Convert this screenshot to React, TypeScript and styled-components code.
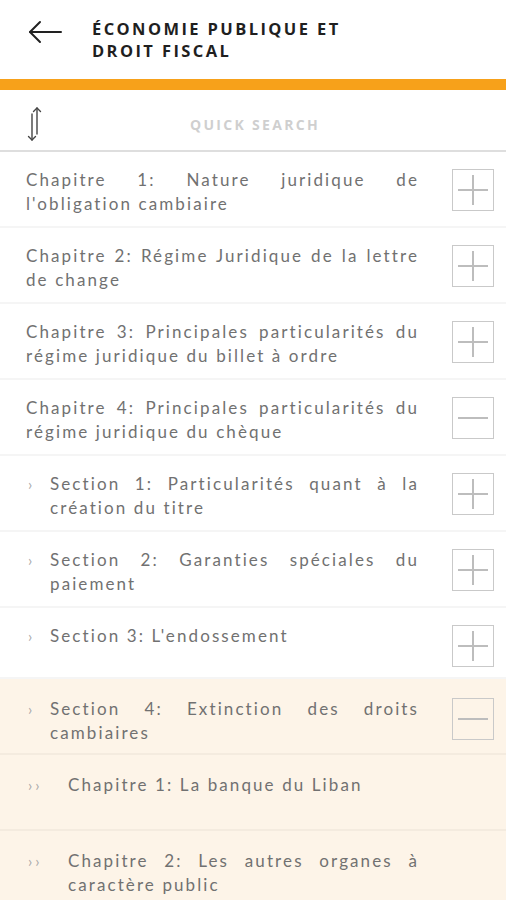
import React from 'react'
import styled, { createGlobalStyle } from 'styled-components'

const GlobalStyle = createGlobalStyle`
  html, body {
    margin: 0;
    padding: 0;
    background: #ffffff;
  }
  body {
    font-family: Lato, "Open Sans", "Liberation Sans", sans-serif;
  }
`

type Kind = 'chapter' | 'section' | 'sub'

type Item = {
  kind: Kind
  label: string
  toggle?: 'plus' | 'minus'
  open?: boolean
}

const items: Item[] = [
  { kind: 'chapter', label: "Chapitre 1: Nature juridique de l'obligation cambiaire", toggle: 'plus' },
  { kind: 'chapter', label: 'Chapitre 2: Régime Juridique de la lettre de change', toggle: 'plus' },
  { kind: 'chapter', label: 'Chapitre 3: Principales particularités du régime juridique du billet à ordre', toggle: 'plus' },
  { kind: 'chapter', label: 'Chapitre 4: Principales particularités du régime juridique du chèque', toggle: 'minus' },
  { kind: 'section', label: 'Section 1: Particularités quant à la création du titre', toggle: 'plus' },
  { kind: 'section', label: 'Section 2: Garanties spéciales du paiement', toggle: 'plus' },
  { kind: 'section', label: "Section 3: L'endossement", toggle: 'plus' },
  { kind: 'section', label: 'Section 4: Extinction des droits cambiaires', toggle: 'minus', open: true },
  { kind: 'sub', label: 'Chapitre 1: La banque du Liban', open: true },
  { kind: 'sub', label: 'Chapitre 2: Les autres organes à caractère public', open: true },
]

const Page = styled.div`
  width: 506px;
  height: 900px;
  overflow: hidden;
  background: #ffffff;
`

const Header = styled.header`
  height: 79px;
  display: flex;
  align-items: flex-start;
  padding: 12px 0 0 28px;
  box-sizing: border-box;
`

const BackButton = styled.button`
  width: 38px;
  height: 40px;
  padding: 0;
  border: 0;
  background: none;
  display: flex;
  align-items: center;
  justify-content: flex-start;
  margin-right: 26px;
`

const Title = styled.h1`
  margin: 6px 0 0;
  font-family: "Open Sans", Lato, sans-serif;
  font-weight: 700;
  font-size: 16.5px;
  line-height: 22px;
  letter-spacing: 2.4px;
  color: #1f1f1f;
  text-transform: uppercase;
`

const AccentBar = styled.div`
  height: 11px;
  background: #f7a11a;
`

const SearchBar = styled.div`
  height: 60px;
  display: flex;
  align-items: center;
  padding: 8px 0 0 24px;
  box-sizing: border-box;
  border-bottom: 2px solid #dedede;
  height: 62px;
`

const SortButton = styled.div`
  width: 24px;
  height: 36px;
  display: flex;
  align-items: center;
`

const SearchLabel = styled.div`
  flex: 1;
  text-align: center;
  margin-right: 44px;
  font-family: "Open Sans", Lato, sans-serif;
  font-weight: 700;
  font-size: 14px;
  letter-spacing: 2.3px;
  color: #cfcfcf;
`

const List = styled.ul`
  list-style: none;
  margin: 0;
  padding: 0;
`

const Row = styled.li<{ $open?: boolean; $kind: Kind }>`
  display: flex;
  align-items: flex-start;
  min-height: ${p => (p.$kind === 'sub' ? '76px' : '0')};
  padding: ${p => (p.$open ? '18px' : '16px')} 12px ${p => (p.$open ? '8px' : '10px')} 26px;
  box-sizing: border-box;
  background: ${p => (p.$open ? '#fdf4e8' : '#ffffff')};
  border-bottom: 2px solid ${p => (p.$open ? '#f4ebdf' : '#f5f5f5')};
`

const Marker = styled.span<{ $kind: Kind }>`
  flex: none;
  box-sizing: border-box;
  width: ${p => (p.$kind === 'sub' ? '42px' : '24px')};
  padding-left: 2px;
  font-size: 15px;
  line-height: 24px;
  letter-spacing: 3px;
  color: #a8a8a8;
`

const Label = styled.span`
  flex: 1;
  font-size: 17px;
  line-height: 24px;
  letter-spacing: 2.1px;
  color: #717171;
  text-align: justify;
  margin-right: 33px;
`

const ToggleBox = styled.div`
  flex: none;
  width: 40px;
  height: 40px;
  margin-top: 1px;
  border: 1px solid #c9c9c9;
  display: flex;
  align-items: center;
  justify-content: center;
`

const Spacer = styled.div`
  flex: none;
  width: 42px;
`

const BackArrow = () => (
  <svg width="34" height="24" viewBox="0 0 34 24" fill="none" stroke="#222" strokeWidth="2" strokeLinecap="round" strokeLinejoin="round">
    <path d="M2 12h31" />
    <path d="M12 2L2 12l10 10" />
  </svg>
)

const SortIcon = () => (
  <svg width="22" height="36" viewBox="0 0 22 36" fill="none" stroke="#444" strokeWidth="1.4" strokeLinecap="round" strokeLinejoin="round">
    <path d="M13 2v26" />
    <path d="M9.5 5.5L13 2l3.5 3.5" />
    <path d="M8 8v26" />
    <path d="M4.5 30.5L8 34l3.5-3.5" />
  </svg>
)

const ToggleIcon = ({ type }: { type: 'plus' | 'minus' }) => (
  <svg width="32" height="32" viewBox="0 0 32 32" stroke="#bdbdbd" strokeWidth="2">
    <path d="M1 16h30" />
    {type === 'plus' && <path d="M16 1v30" />}
  </svg>
)

const App = () => {
  return (
    <Page>
      <GlobalStyle />
      <Header>
        <BackButton aria-label="back">
          <BackArrow />
        </BackButton>
        <Title>
          Économie publique et
          <br />
          droit fiscal
        </Title>
      </Header>
      <AccentBar />
      <SearchBar>
        <SortButton>
          <SortIcon />
        </SortButton>
        <SearchLabel>QUICK SEARCH</SearchLabel>
      </SearchBar>
      <List>
        {items.map((item, i) => (
          <Row key={i} $open={item.open} $kind={item.kind}>
            {item.kind !== 'chapter' && (
              <Marker $kind={item.kind}>{item.kind === 'sub' ? '››' : '›'}</Marker>
            )}
            <Label>{item.label}</Label>
            {item.toggle ? (
              <ToggleBox>
                <ToggleIcon type={item.toggle} />
              </ToggleBox>
            ) : (
              <Spacer />
            )}
          </Row>
        ))}
      </List>
    </Page>
  )
}

export default App
